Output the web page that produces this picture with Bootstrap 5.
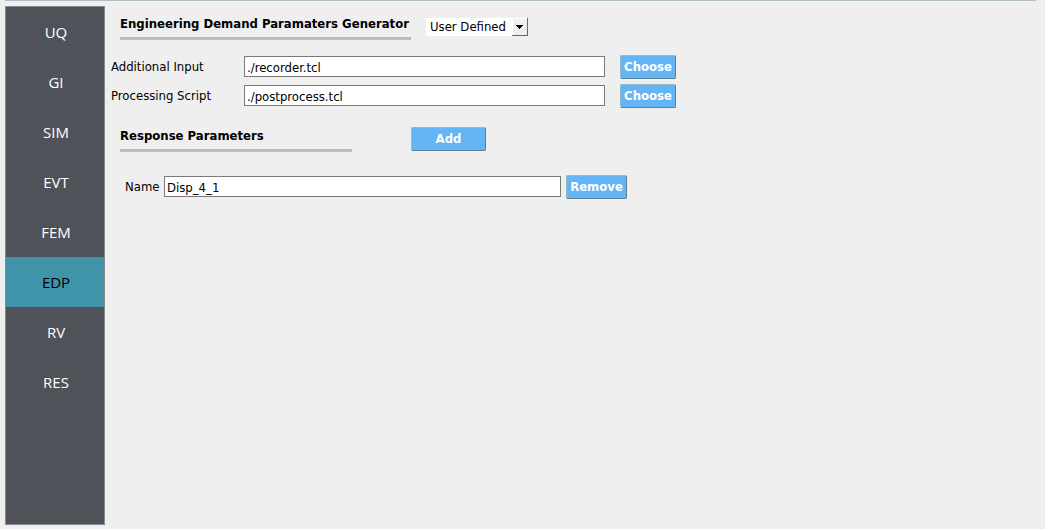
<!DOCTYPE html>
<html lang="en">
<head>
<meta charset="utf-8">
<meta name="viewport" content="width=device-width, initial-scale=1">
<title>Engineering Demand Paramaters Generator</title>
<link href="https://cdn.jsdelivr.net/npm/bootstrap@5.3.0/dist/css/bootstrap.min.css" rel="stylesheet">
<style>
  body { background: #efefef; color: #000; font-family: "DejaVu Sans Condensed", "DejaVu Sans", sans-serif; font-size: 13px; line-height: 20px; }
  .app-shell { padding: 0 9px 4px 5px; }
  .top-rule { height: 1px; background: #b0bec5; }
  .side-menu { width: 100px; flex: none; margin-top: 5px; background: #4f5259; border: 1px solid #858990; font-family: "Open Sans", "Noto Sans", sans-serif; font-size: 15px; }
  .side-menu .nav-link { height: 50px; padding: 0 0 0 2px; border-radius: 0; color: #fff; }
  .side-menu .nav-link.active { background: #3f94a9; color: #000; }
  .workspace { padding: 12px 0 0 6px; }
  .section-title { font-size: 13px; line-height: 22px; font-weight: 700; height: 27px; margin: 0 0 0 9px; border-bottom: 3px solid #b0bec5; }
  .title-main { width: 291px; }
  .title-sub { width: 232px; }
  .kind-row { margin-bottom: 15px; }
  .response-row { margin: 17px 0 23px; }
  .kind-select { width: 102px; height: 18px; margin: 5px 0 0 15px; padding: 0 20px 0 4px; border: 0; border-radius: 0; color: #000; font-size: 13px; line-height: 18px;
    background: #fff url("data:image/svg+xml,%3Csvg xmlns='http://www.w3.org/2000/svg' width='16' height='18'%3E%3Cpath fill='%23efefef' d='M0 0h16v18H0z'/%3E%3Cpath fill='%23fff' d='M0 0h15v1H1v16H0z'/%3E%3Cpath fill='%23696969' d='M15 0h1v18H0v-1h15z'/%3E%3Cpath d='M4 7h7v1h-1v1H9v1H8v1H7v-1H6V9H5V8H4z'/%3E%3C/svg%3E") right center / 16px 18px no-repeat; }
  .field-row { line-height: 24px; }
  .field-row + .field-row { margin-top: 5px; }
  .text-field { height: 21px; min-height: 0; margin-top: 1px; padding: 1px 2px 0; border: 1px solid #7a7a7a; border-radius: 0; color: #000; font-size: 13px; line-height: 18px; }
  .field-label { width: 133px; }
  .name-label { width: 39px; margin-left: 14px; }
  .field-file { width: 361px; margin-right: 15px; }
  .field-name { width: 397px; margin-right: 5px; }
  .btn-tool { height: 24px; padding: 0; border: 1px solid; border-color: #8fbcc8 #5c7d92 #5c7d92 #8fbcc8; border-radius: 2px; background: #64b5f6; color: #fff; font-size: 13px; font-weight: 700; line-height: 22px; }
  .btn-tool:hover { background: #42a5f5; color: #fff; }
  .btn-file { width: 56px; }
  .btn-add { width: 75px; margin: 2px 0 0 59px; }
  .btn-remove { width: 61px; }
</style>
</head>
<body>
<div class="app-shell d-flex flex-column min-vh-100">
  <div class="top-rule"></div>
  <div class="d-flex flex-grow-1">
    <nav class="side-menu nav nav-pills flex-column flex-nowrap" aria-label="Sections">
      <a class="nav-link d-flex align-items-center justify-content-center" href="#uq">UQ</a>
      <a class="nav-link d-flex align-items-center justify-content-center" href="#gi">GI</a>
      <a class="nav-link d-flex align-items-center justify-content-center" href="#sim">SIM</a>
      <a class="nav-link d-flex align-items-center justify-content-center" href="#evt">EVT</a>
      <a class="nav-link d-flex align-items-center justify-content-center" href="#fem">FEM</a>
      <a class="nav-link d-flex align-items-center justify-content-center active" aria-current="page" href="#edp">EDP</a>
      <a class="nav-link d-flex align-items-center justify-content-center" href="#rv">RV</a>
      <a class="nav-link d-flex align-items-center justify-content-center" href="#res">RES</a>
    </nav>
    <main class="workspace flex-grow-1">
      <div class="kind-row d-flex align-items-start">
        <h1 class="section-title title-main text-nowrap">Engineering Demand Paramaters Generator</h1>
        <select class="form-select kind-select" aria-label="Generator type">
          <option>User Defined</option>
        </select>
      </div>
      <div class="field-row d-flex align-items-start">
        <label class="field-label" for="recorder">Additional Input</label>
        <input class="form-control text-field field-file" id="recorder" type="text" value="./recorder.tcl">
        <button class="btn btn-tool btn-file" type="button">Choose</button>
      </div>
      <div class="field-row d-flex align-items-start">
        <label class="field-label" for="script">Processing Script</label>
        <input class="form-control text-field field-file" id="script" type="text" value="./postprocess.tcl">
        <button class="btn btn-tool btn-file" type="button">Choose</button>
      </div>
      <div class="response-row d-flex align-items-start">
        <h2 class="section-title title-sub">Response Parameters</h2>
        <button class="btn btn-tool btn-add" type="button">Add</button>
      </div>
      <div class="field-row d-flex align-items-start">
        <label class="name-label" for="name">Name</label>
        <input class="form-control text-field field-name" id="name" type="text" value="Disp_4_1">
        <button class="btn btn-tool btn-remove" type="button">Remove</button>
      </div>
    </main>
  </div>
</div>
<script src="https://cdn.jsdelivr.net/npm/bootstrap@5.3.0/dist/js/bootstrap.bundle.min.js"></script>
</body>
</html>
